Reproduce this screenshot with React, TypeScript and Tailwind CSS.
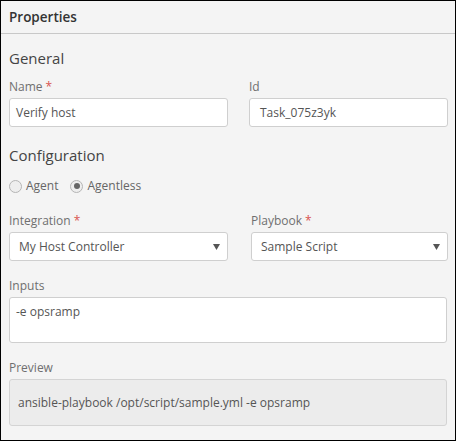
import React from "react";

const Req = () => <span className="text-[#d9534f] ml-[3px]">*</span>;

const Label = ({ children }: { children: React.ReactNode }) => (
    <div className="text-[12px] leading-[18px] text-[#6f6f6f] mb-[2px]">{children}</div>
);

const TextBox = ({ value, pad = "px-[6px]" }: { value: string; pad?: string }) => (
    <div className={`h-[29px] bg-white border border-[#cfcfcf] rounded-[3px] ${pad} flex items-center text-[12px] text-[#555]`}>
        {value}
    </div>
);

const Select = ({ value }: { value: string }) => (
    <div className="h-[29px] bg-white border border-[#cfcfcf] rounded-[3px] pl-[9px] pr-[7px] flex items-center justify-between text-[12px] text-[#555]">
        <span>{value}</span>
        <svg width="7" height="6" viewBox="0 0 7 6">
            <path d="M0 0 H7 L3.5 6 Z" fill="#555" />
        </svg>
    </div>
);

const Radio = ({ label, checked }: { label: string; checked?: boolean }) => (
    <label className="flex items-center gap-[4px] text-[12px] text-[#666]">
        <span className="w-[13px] h-[13px] rounded-full border border-[#b5b5b5] bg-[#eee] flex items-center justify-center">
            {checked && <span className="w-[6px] h-[6px] rounded-full bg-[#666]" />}
        </span>
        {label}
    </label>
);

export default function App() {
    return (
        <div
            className="w-[456px] h-[441px] border border-black bg-[#f4f4f4] flex flex-col"
            style={{ fontFamily: '"Open Sans", "Noto Sans", sans-serif' }}
        >
            {/* Header */}
            <div className="h-[33px] shrink-0 border-b border-[#c8c8c8] px-[8px] flex items-center text-[13.5px] font-semibold text-[#333]">
                Properties
            </div>

            {/* Body */}
            <div className="px-[8px] flex flex-col">
                <div className="mt-[13px] text-[15px] leading-[22px] text-[#444]">General</div>

                <div className="mt-[9px] grid grid-cols-[219px_199px] gap-x-[21px]">
                    <div>
                        <Label>Name<Req /></Label>
                        <TextBox value="Verify host" />
                    </div>
                    <div>
                        <Label>Id</Label>
                        <TextBox value="Task_075z3yk" pad="px-[10px]" />
                    </div>
                </div>

                <div className="mt-[17px] text-[15px] leading-[22px] text-[#444]">Configuration</div>

                <div className="mt-[11px] flex items-center gap-[12px]">
                    <Radio label="Agent" />
                    <Radio label="Agentless" checked />
                </div>

                <div className="mt-[17px] grid grid-cols-[219px_197px] gap-x-[23px]">
                    <div>
                        <Label>Integration<Req /></Label>
                        <Select value="My Host Controller" />
                    </div>
                    <div>
                        <Label>Playbook<Req /></Label>
                        <Select value="Sample Script" />
                    </div>
                </div>

                <div className="mt-[16px]">
                    <Label>Inputs</Label>
                    <div className="h-[46px] bg-white border border-[#cfcfcf] rounded-[3px] px-[6px] pt-[5px] text-[12px] text-[#555]">
                        -e opsramp
                    </div>
                </div>

                <div className="mt-[16px]">
                    <Label>Preview</Label>
                    <div className="h-[47px] bg-[#ececec] border border-[#d4d4d4] rounded-[3px] px-[8px] flex items-center text-[12px] text-[#555]">
                        ansible-playbook /opt/script/sample.yml -e opsramp
                    </div>
                </div>
            </div>
        </div>
    );
}
